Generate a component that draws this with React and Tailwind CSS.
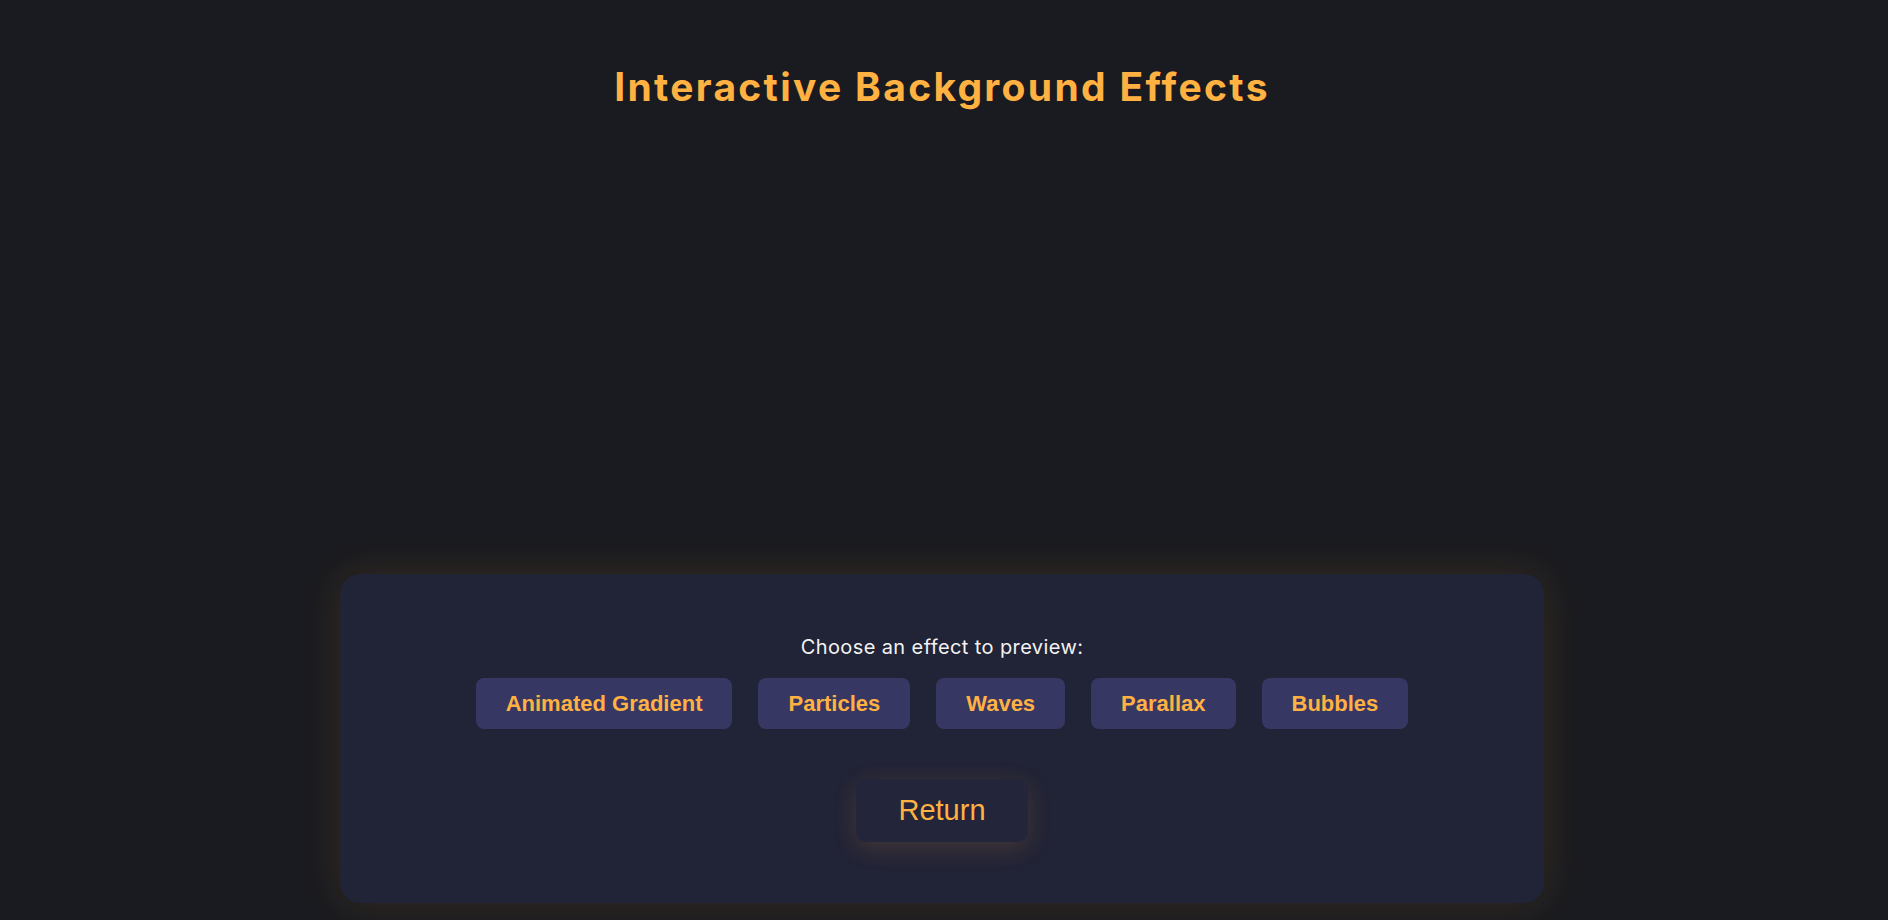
import React from "react";

const effects = ["Animated Gradient", "Particles", "Waves", "Parallax", "Bubbles"];

export default function App() {
  return (
    <div className="min-h-screen bg-[#1a1b20] flex flex-col items-center pr-[4px]">
      <h1
        className="mt-[64px] text-[39px] leading-[46px] font-bold tracking-[2.3px] text-[#ffb142]"
        style={{ fontFamily: "Inter, 'Open Sans', sans-serif" }}
      >
        Interactive Background Effects
      </h1>

      {/* preview canvas area */}
      <div className="h-[464px] w-full" />

      <div className="w-[1204px] rounded-[20px] bg-[#212336] pt-[61px] pb-[61px] flex flex-col items-center shadow-[0_0_40px_rgba(255,165,40,0.12)]">
        <p
          className="text-[20px] leading-[24px] tracking-[0.4px] text-[#f2f2f2]"
          style={{ fontFamily: "Inter, 'Open Sans', sans-serif" }}
        >
          Choose an effect to preview:
        </p>
        <div className="mt-[19px] flex gap-[26px]">
          {effects.map((e) => (
            <button
              key={e}
              className="px-[30px] py-[12px] text-[22px] leading-[27px] font-bold text-[#ffb142] bg-[#373764] rounded-[8px]"
              style={{ fontFamily: "'Liberation Sans', Arial, sans-serif" }}
            >
              {e}
            </button>
          ))}
        </div>
        <button
          className="mt-[50px] px-[42px] py-[15px] text-[29px] leading-[33px] text-[#ffb142] bg-[#23253b] rounded-[10px] shadow-[0_6px_24px_rgba(255,170,60,0.16)]"
          style={{ fontFamily: "'Liberation Sans', Arial, sans-serif" }}
        >
          Return
        </button>
      </div>
    </div>
  );
}
